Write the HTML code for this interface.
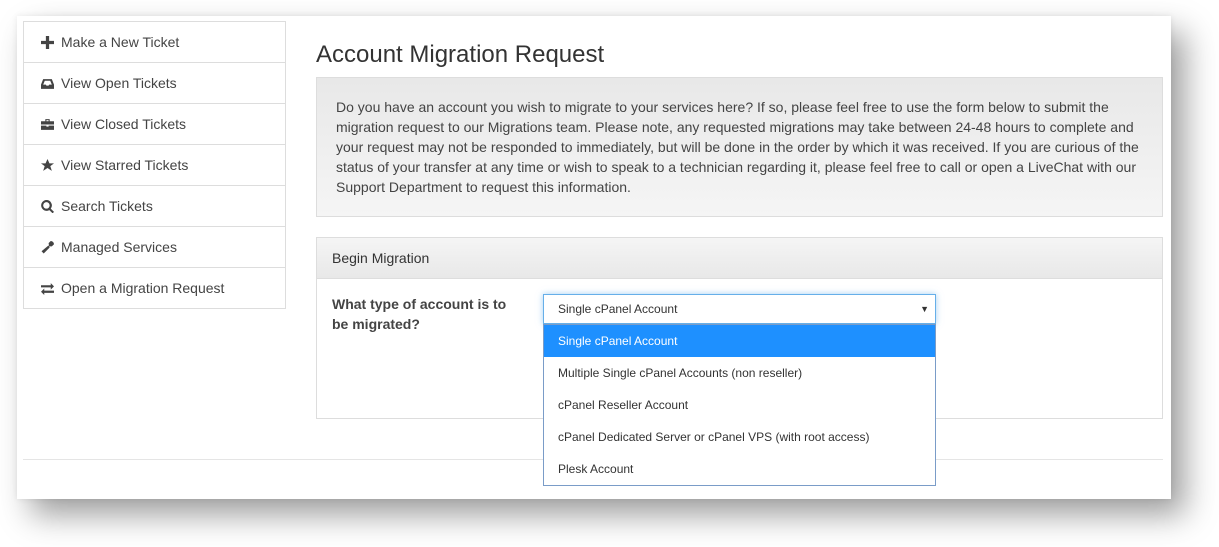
<!DOCTYPE html>
<html><head><style>
body{margin:0;width:1219px;height:547px;background:#fff;font-family:"Liberation Sans",sans-serif;color:#333;position:relative;overflow:hidden}
.card{position:absolute;left:17px;top:16px;width:1154px;height:483px;background:#fff;box-shadow:14px 16px 30px rgba(0,0,0,.38),0 0 6px rgba(0,0,0,.08)}
.side{position:absolute;left:23px;top:21px;width:261px;border:1px solid #ddd;background:#fff}
.side div{height:40px;border-top:1px solid #ddd;font-size:14px;line-height:40px;padding-left:17px;color:#444}
.side div:first-child{border-top:none}
.side svg{width:13px;height:13px;vertical-align:-2px;margin-right:7px;fill:#444}
h1{position:absolute;left:316px;top:41px;margin:0;font-size:24px;font-weight:normal;color:#333}
.well{position:absolute;left:316px;top:77px;width:845px;height:138px;border:1px solid #ddd;background:linear-gradient(#e8e8e8,#f5f5f5)}
.well p{margin:19px 19px 0 19px;font-size:14px;line-height:20px;color:#444}
.panel{position:absolute;left:316px;top:237px;width:845px;height:180px;border:1px solid #ddd;background:#fff}
.ph{height:40px;border-bottom:1px solid #ddd;background:linear-gradient(#f5f5f5,#e8e8e8);font-size:14px;line-height:41px;padding-left:15px;color:#333}
.lbl{position:absolute;left:15px;top:56px;font-size:14px;font-weight:bold;line-height:20px;color:#444}
.sel{position:absolute;left:543px;top:294px;border:1px solid #66afe9;box-shadow:0 0 6px rgba(102,175,233,.6);background:#fff;font-size:12px;line-height:28px;padding-left:14px;box-sizing:border-box;width:393px;height:30px;color:#333}
.sel span{position:absolute;right:6px;top:0;font-size:9px}
.dd{position:absolute;left:543px;top:324px;width:391px;height:160px;border:1px solid #7a9cc8;background:#fff;font-size:12px}
.dd div{height:32px;line-height:32px;padding-left:14px;color:#333}
.dd div.a{background:#1e90ff;color:#fff}
.hr{position:absolute;left:23px;top:459px;width:1140px;border-top:1px solid #e5e5e5}
</style></head><body>
<div class="card"></div>
<div class="side">
<div><svg viewBox="0 0 12 12"><path d="M4.5 0h3v4.5H12v3H7.5V12h-3V7.5H0v-3h4.5z"/></svg>Make a New Ticket</div>
<div><svg viewBox="0 0 12 12"><path d="M2 2h8l2 5v4H0V7zM2 7h2.5l.5 1h2l.5-1H10L8.5 3.5h-5z"/></svg>View Open Tickets</div>
<div><svg viewBox="0 0 12 12"><path d="M4 1h4v2h4v3H0V3h4zM5 2v1h2V2zM0 7h5v1h2V7h5v4H0z"/></svg>View Closed Tickets</div>
<div><svg viewBox="0 0 12 12"><path d="M6 0l1.8 4H12L8.6 6.6 10 11 6 8.3 2 11l1.4-4.4L0 4h4.2z"/></svg>View Starred Tickets</div>
<div><svg viewBox="0 0 12 12"><path d="M5 0a5 5 0 014 8l3 3-1.3 1.3-3-3A5 5 0 115 0zm0 2a3 3 0 100 6 3 3 0 000-6z"/></svg>Search Tickets</div>
<div><svg viewBox="0 0 12 12"><path d="M9 0a3 3 0 013 3L10 5 7.5 5 7 2zM7 4L8 6 2.5 11.5 .5 9.5z"/></svg>Managed Services</div>
<div><svg viewBox="0 0 12 12"><path d="M0 3h9V1l3 3-3 3V5H0zM12 8H3V6L0 9l3 3v-2h9z"/></svg>Open a Migration Request</div>
</div>
<h1>Account Migration Request</h1>
<div class="well"><p>Do you have an account you wish to migrate to your services here? If so, please feel free to use the form below to submit the migration request to our Migrations team. Please note, any requested migrations may take between 24-48 hours to complete and your request may not be responded to immediately, but will be done in the order by which it was received. If you are curious of the status of your transfer at any time or wish to speak to a technician regarding it, please feel free to call or open a LiveChat with our Support Department to request this information.</p></div>
<div class="panel"><div class="ph">Begin Migration</div><div class="lbl">What type of account is to<br>be migrated?</div></div>
<div class="hr"></div>
<div class="sel">Single cPanel Account<span>▼</span></div>
<div class="dd">
<div class="a">Single cPanel Account</div>
<div>Multiple Single cPanel Accounts (non reseller)</div>
<div>cPanel Reseller Account</div>
<div>cPanel Dedicated Server or cPanel VPS (with root access)</div>
<div>Plesk Account</div>
</div>
</body></html>
